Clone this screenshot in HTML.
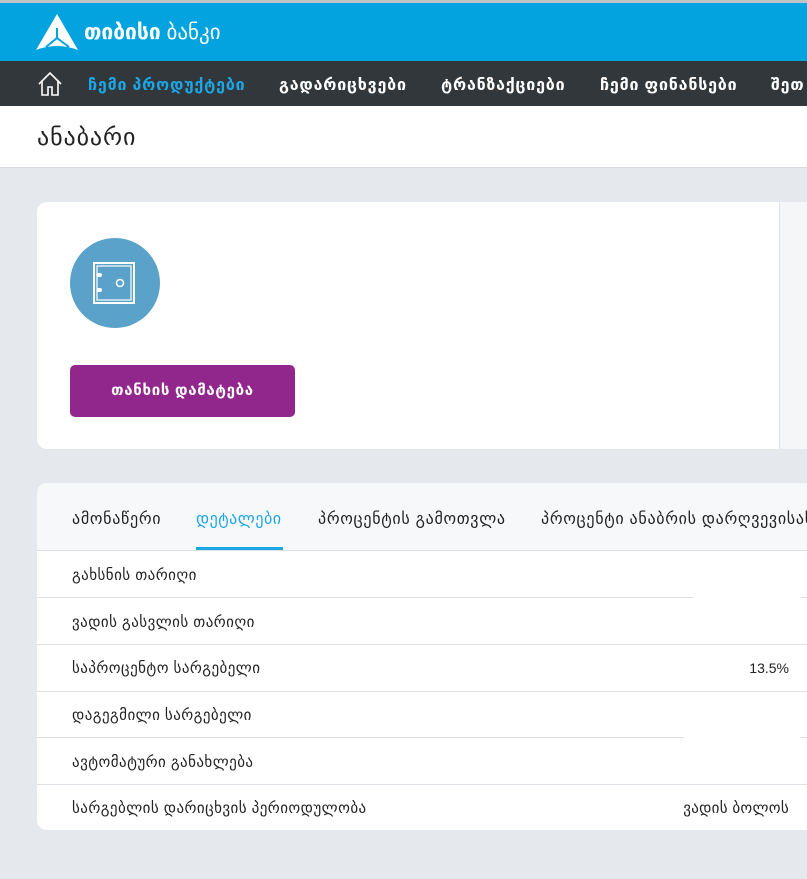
<!DOCTYPE html>
<html><head><meta charset="utf-8"><style>
*{margin:0;padding:0;box-sizing:border-box}
body{width:807px;height:879px;overflow:hidden;background:#e5e8ed;font-family:"Liberation Sans","DejaVu Sans",sans-serif;position:relative;color:#222}
.a{position:absolute;white-space:nowrap}
.nav{font-weight:bold;font-size:16px;color:#fff;top:75px;letter-spacing:0.8px}
.row{position:absolute;left:37px;width:770px;height:1px;background:#dcdfe3}
.rl{position:absolute;left:72px;font-size:15px;color:#222;white-space:nowrap;letter-spacing:0.45px}
.tab{font-size:16px;letter-spacing:0.7px;top:509px}
</style></head><body>
<div class="a" style="left:0;top:0;width:807px;height:3px;background:#bfc2c5"></div>
<div class="a" style="left:0;top:3px;width:807px;height:58px;background:#03a3e0"></div>
<svg class="a" style="left:36px;top:14px" width="42" height="38" viewBox="0 0 42 38"><path d="M21 0 L42 36 Q21 28 0 36 Z" fill="#fff"/><path d="M21 14 L21 24 M21 24 L10 33 M21 24 L33 33" stroke="#03a3e0" stroke-width="2" fill="none"/></svg>
<div class="a" style="left:84px;top:20px;font-size:21px;color:#fff"><b>თიბისი</b> <span style="font-weight:normal">ბანკი</span></div>
<div class="a" style="left:0;top:61px;width:807px;height:45px;background:#31373b"></div>
<svg class="a" style="left:37px;top:71px" width="26" height="26" viewBox="0 0 26 26"><path d="M2 13 L13 2 L24 13 M5 10 V24 H11 V16 H15 V24 H21 V10" stroke="#fff" stroke-width="1.6" fill="none"/></svg>
<div class="a nav" style="left:88px;color:#1ba6e6">ჩემი პროდუქტები</div>
<div class="a nav" style="left:279px">გადარიცხვები</div>
<div class="a nav" style="left:441px">ტრანზაქციები</div>
<div class="a nav" style="left:600px">ჩემი ფინანსები</div>
<div class="a nav" style="left:771px">შეთ</div>
<div class="a" style="left:0;top:106px;width:807px;height:62px;background:#fff;border-bottom:1px solid #d8dbe0"></div>
<div class="a" style="left:37px;top:123px;font-size:24px;color:#222;letter-spacing:0.9px">ანაბარი</div>
<div class="a" style="left:37px;top:202px;width:790px;height:247px;background:#fff;border-radius:10px"></div>
<div class="a" style="left:779px;top:202px;width:28px;height:247px;background:#f5f6f8;border-left:1px solid #dfe2e6"></div>
<div class="a" style="left:70px;top:238px;width:90px;height:90px;border-radius:50%;background:#5aa2c9"></div>
<svg class="a" style="left:92px;top:261px" width="44" height="44" viewBox="0 0 44 44"><rect x="2" y="2" width="40" height="40" fill="none" stroke="#fff" stroke-width="2"/><rect x="5" y="5" width="34" height="34" fill="none" stroke="#fff" stroke-width="1.2"/><circle cx="28" cy="22" r="3.5" fill="none" stroke="#fff" stroke-width="1.5"/><path d="M5 12 h3 a2 2 0 0 1 0 4 h-3 M5 27 h3 a2 2 0 0 1 0 4 h-3" fill="#fff"/></svg>
<div class="a" style="left:70px;top:365px;width:225px;height:52px;background:#91278c;border-radius:5px;color:#fff;font-weight:bold;font-size:15px;text-align:center;line-height:52px;letter-spacing:0.7px">თანხის დამატება</div>
<div class="a" style="left:37px;top:483px;width:790px;height:347px;background:#fff;border-radius:10px;overflow:hidden"><div style="height:68px;background:#f7f8fa;border-bottom:1px solid #dcdfe3"></div></div>
<div class="a tab" style="left:72px">ამონაწერი</div>
<div class="a tab" style="left:196px;color:#1ba6e6;letter-spacing:0.5px">დეტალები</div>
<div class="a" style="left:196px;top:547px;width:87px;height:3px;background:#1ba6e6"></div>
<div class="a tab" style="left:318px">პროცენტის გამოთვლა</div>
<div class="a tab" style="left:541px">პროცენტი ანაბრის დარღვევისას</div>
<div class="rl" style="top:566px">გახსნის თარიღი</div>
<div class="row" style="top:597px;width:656px"></div><div class="row" style="left:801px;top:597px;width:6px"></div>
<div class="rl" style="top:613px">ვადის გასვლის თარიღი</div>
<div class="row" style="top:644px"></div>
<div class="rl" style="top:659px">საპროცენტო სარგებელი</div>
<div class="a" style="right:18px;top:660px;font-size:14px">13.5%</div>
<div class="row" style="top:691px"></div>
<div class="rl" style="top:706px">დაგეგმილი სარგებელი</div>
<div class="row" style="top:737px;width:647px"></div><div class="row" style="left:801px;top:737px;width:6px"></div>
<div class="rl" style="top:753px">ავტომატური განახლება</div>
<div class="row" style="top:784px"></div>
<div class="rl" style="top:799px">სარგებლის დარიცხვის პერიოდულობა</div>
<div class="a" style="right:18px;top:799px;font-size:15px;letter-spacing:0.3px">ვადის ბოლოს</div>
</body></html>
